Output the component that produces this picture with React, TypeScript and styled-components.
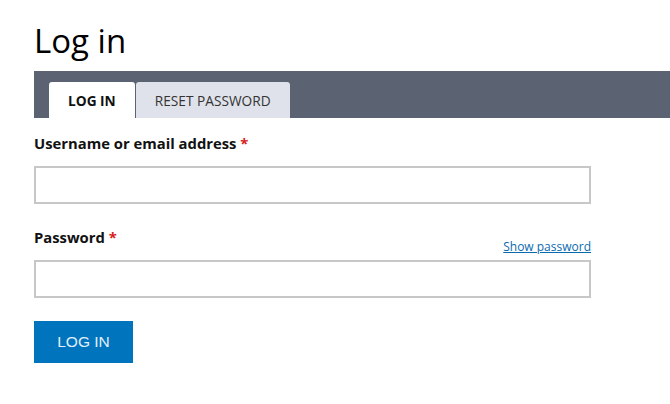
import React from 'react';
import styled, { createGlobalStyle } from 'styled-components';

const GlobalStyle = createGlobalStyle`
  html, body {
    margin: 0;
    padding: 0;
    background: #fff;
  }
  body {
    font-family: "Open Sans", "Noto Sans", sans-serif;
    color: #111;
    overflow: hidden;
  }
`;

const App: React.FC = () => {
  return (
    <>
      <GlobalStyle />
      <Page>
        <Title>Log in</Title>
        <TabBar>
          <Tab active>LOG IN</Tab>
          <Tab>RESET PASSWORD</Tab>
        </TabBar>
        <Form onSubmit={(e) => e.preventDefault()}>
          <Field>
            <LabelRow>
              <Label htmlFor="name">Username or email address <Required>*</Required></Label>
            </LabelRow>
            <Input id="name" type="text" />
          </Field>
          <Field>
            <LabelRow>
              <Label htmlFor="pass">Password <Required>*</Required></Label>
              <ShowLink href="#">Show password</ShowLink>
            </LabelRow>
            <Input id="pass" type="password" />
          </Field>
          <Submit type="submit">LOG IN</Submit>
        </Form>
      </Page>
    </>
  );
};

export default App;

const Page = styled.div`
  padding: 20px 0 0 34px;
`;

const Title = styled.h1`
  margin: 0;
  font-size: 33px;
  font-weight: 400;
  line-height: 42px;
  color: #000;
`;

const TabBar = styled.div`
  margin-top: 9px;
  height: 47px;
  background: #5b6373;
  display: flex;
  align-items: flex-end;
  padding-left: 15px;
  gap: 1px;
`;

const Tab = styled.div<{ active?: boolean }>`
  height: 36px;
  box-sizing: border-box;
  display: flex;
  align-items: center;
  border-radius: 3px 3px 0 0;
  background: ${(p) => (p.active ? '#fff' : '#dfe2ea')};
  color: ${(p) => (p.active ? '#111' : '#333')};
  font-size: 13.7px;
  font-weight: ${(p) => (p.active ? 700 : 400)};
  padding: 0 19px;
`;

const Form = styled.form`
  width: 557px;
  padding-top: 15px;
`;

const Field = styled.div`
  margin-bottom: 23px;
`;

const LabelRow = styled.div`
  display: flex;
  justify-content: space-between;
  align-items: flex-end;
  height: 20px;
  margin-bottom: 13px;
`;

const Label = styled.label`
  font-size: 14.8px;
  font-weight: 700;
  color: #111;
  line-height: 20px;
`;

const Required = styled.span`
  color: #d72222;
`;

const ShowLink = styled.a`
  font-size: 12px;
  color: #0a6ab0;
  text-decoration: underline;
  line-height: 14px;
  margin-bottom: -7px;
`;

const Input = styled.input`
  display: block;
  width: 100%;
  height: 38px;
  box-sizing: border-box;
  border: 2px solid #c7c7c7;
  border-radius: 0;
  background: #fff;
  outline: none;
`;

const Submit = styled.button`
  display: block;
  width: 99px;
  height: 42px;
  border: none;
  background: #0074bd;
  color: #e3f0fb;
  font-family: "Liberation Sans", Arial, sans-serif;
  font-size: 15.5px;
  cursor: pointer;
`;
